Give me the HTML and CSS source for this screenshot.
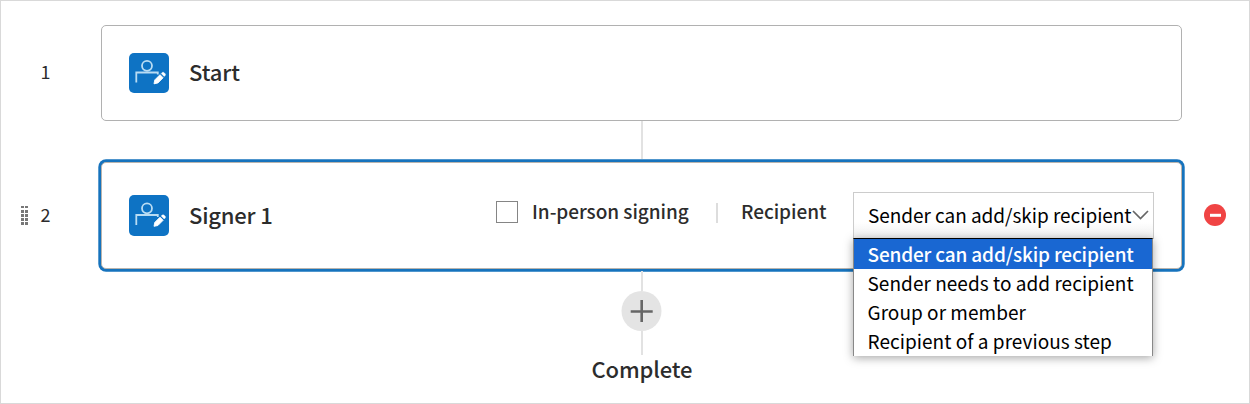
FILE: index.html
```html
<!DOCTYPE html>
<html lang="en">
<head>
<meta charset="utf-8">
<title>Workflow</title>
<link rel="stylesheet" href="styles.css">
</head>
<body>
<svg width="0" height="0" class="defs">
  <symbol id="signer" viewBox="0 0 40 40">
    <g fill="none" stroke="#b9dcf3" stroke-width="1.800">
      <circle cx="18" cy="12.800" r="5"/>
      <path d="M7.300 29.500V19.500H28.800V21.500"/>
    </g>
    <path d="M25 30.800l.8-3.900 5.200-5.200 3.100 3.100-5.200 5.200z" fill="#fff" stroke="#fff" stroke-width=".9" stroke-linejoin="round"/>
    <path d="M32.200 20.500l1-1q.9-.7 1.700 0l1.300 1.300q.7.800 0 1.700l-1 1z" fill="#fff" stroke="#fff" stroke-width=".4"/>
  </symbol>
</svg>
<main class="flow">
  <section class="row">
    <div class="index"><span>1</span></div>
    <div class="card start">
      <svg class="avatar"><use href="#signer"/></svg>
      <h2 class="title">Start</h2>
    </div>
  </section>
  <div class="line first"></div>
  <section class="row second">
    <div class="index">
      <svg class="grip" width="7" height="19"><path d="M0 0h3v2H0zM4 0h3v2H4zM0 4h3v3H0zM4 4h3v3H4zM0 8h3v3H0zM4 8h3v3H4zM0 12h3v3H0zM4 12h3v3H4zM0 16h3v3H0zM4 16h3v3H4z" fill="#777"/></svg>
      <span>2</span>
    </div>
    <div class="card signer">
      <svg class="avatar tall"><use href="#signer"/></svg>
      <h2 class="title">Signer 1</h2>
      <div class="options">
        <span class="checkbox"></span>
        <span class="label in-person">In-person signing</span>
        <span class="divider"></span>
        <span class="label recipient">Recipient</span>
      </div>
      <div class="select">
        <span>Sender can add/skip recipient</span>
        <svg class="chevron" width="17" height="10"><path d="M1 1l7.500 7.500L16 1" fill="none" stroke="#666" stroke-width="1.700"/></svg>
        <ul class="menu">
          <li class="active">Sender can add/skip recipient</li>
          <li>Sender needs to add recipient</li>
          <li>Group or member</li>
          <li>Recipient of a previous step</li>
        </ul>
      </div>
    </div>
    <svg class="remove" width="22" height="22"><circle cx="11" cy="11" r="11" fill="#f04444"/><path d="M6 9.800h11v3H6z" fill="#fff"/></svg>
  </section>
  <div class="line"></div>
  <svg class="add" width="41" height="40"><circle cx="20.500" cy="20" r="20" fill="#e4e4e4"/><path d="M20.700 9v22M9.700 20.500h22" stroke="#666" stroke-width="2.600"/></svg>
  <div class="line last"></div>
  <div class="complete">Complete</div>
</main>
</body>
</html>
```
FILE: styles.css
```css
* { box-sizing: border-box; }
body { margin: 0; background: #fff; color: #2c2c2c; font-family: "Noto Sans CJK SC", "Noto Sans", sans-serif; }
.defs { display: block; }
.flow { width: 1250px; height: 404px; border: 1px solid #d9d9d9; padding-top: 24px; display: flex; flex-direction: column; overflow: hidden; }
.row { display: flex; align-items: center; flex-shrink: 0; }
.index { width: 100px; flex-shrink: 0; display: flex; align-items: center; padding-left: 39.500px; font-size: 18px; line-height: 24px; }
.index span { padding-bottom: 4px; }
.card { display: flex; align-items: center; background: #fff; flex-shrink: 0; }
.start { width: 1081px; height: 96px; border: 1px solid #b1b1b1; border-radius: 5px; padding-left: 27px; }
.second { height: 112px; }
.second .index { width: 100px; padding-left: 20px; }
.second .index span { padding-bottom: 2px; }
.grip { margin-right: 12.500px; }
/* The selection ring sits outside the card's own border. */
.signer { width: 1081px; height: 107px; margin-top: 1px; border: 1px solid #b9b4ae; border-radius: 5px; padding: 0 0 1px 27px; box-shadow: 0 0 0 2.700px #1673bd; }
.avatar { width: 40px; height: 40px; background: #0e73c4; border-radius: 5px; flex-shrink: 0; }
.tall { height: 41px; }
.title { margin: 0 0 0 20px; padding-bottom: 4px; font-size: 22px; font-weight: 500; line-height: 32px; letter-spacing: -.1px; white-space: nowrap; }
.signer .title { width: 307px; padding-bottom: 2px; letter-spacing: -.2px; }
.options { display: flex; align-items: center; width: 357px; padding-bottom: 6px; flex-shrink: 0; }
.checkbox { width: 22px; height: 22px; border: 1px solid #858585; margin-right: 14px; flex-shrink: 0; }
.label { padding-bottom: 2px; font-size: 19px; font-weight: 500; line-height: 28px; letter-spacing: -.05px; white-space: nowrap; }
.in-person { width: 184px; }
.divider { width: 2px; height: 20px; background: #ddd; margin: 2px 23px 0 0; }
.select { position: relative; width: 301px; height: 47px; border: 1px solid #ccc; padding-left: 14px; display: flex; align-items: center; font-size: 19px; color: #000; white-space: nowrap; background: linear-gradient(#fff 65%, #efefef); flex-shrink: 0; }
.select > span { width: 264px; padding-bottom: 2px; letter-spacing: -.04px; }
.menu { position: absolute; z-index: 2; left: -1px; top: 45px; width: 300px; margin: 0; padding: 0; list-style: none; background: #fff; border: 1px solid #888; border-top: 1px solid #000; border-bottom: 0; box-shadow: 0 2px 9px rgba(0,0,0,.35); }
.menu li { height: 29px; line-height: 27px; padding-left: 13.500px; letter-spacing: .04px; }
.menu li:first-child { height: 30px; line-height: 30px; }
.menu .active { background: #1967d2; color: #fff; font-weight: 500; letter-spacing: -.16px; }
.remove { margin-left: 22px; }
.line { width: 2px; height: 20px; background: #e2e2e2; margin-left: 639.500px; flex-shrink: 0; }
.first { height: 38px; }
.add { margin-left: 620px; flex-shrink: 0; }
.last { height: 24px; }
.complete { width: 100px; margin: -2px 0 0 590.500px; font-size: 22px; font-weight: 500; line-height: 30px; letter-spacing: -.15px; white-space: nowrap; }
```
